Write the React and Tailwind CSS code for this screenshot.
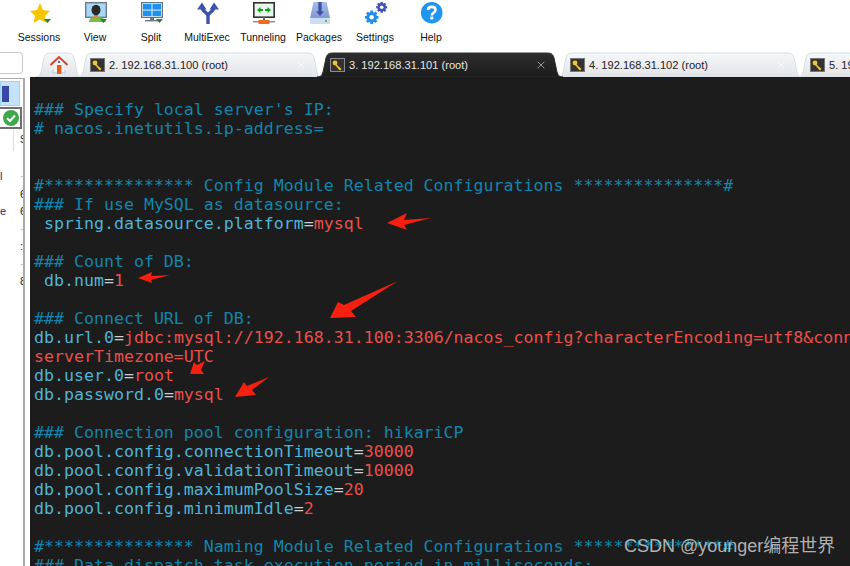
import { X } from 'lucide-react';

const tools = [
  { label: 'Sessions', icon: <StarIcon /> },
  { label: 'View', icon: <ViewIcon /> },
  { label: 'Split', icon: <SplitIcon /> },
  { label: 'MultiExec', icon: <MultiExecIcon /> },
  { label: 'Tunneling', icon: <TunnelIcon /> },
  { label: 'Packages', icon: <PackagesIcon /> },
  { label: 'Settings', icon: <SettingsIcon /> },
  { label: 'Help', icon: <HelpIcon /> },
];

const C = 'text-[#1185ad]'; // comment
const K = 'text-[#4fb4d8]'; // key
const V = 'text-[#e9504c]'; // value
const E = 'text-[#d0d0d0]'; // equals sign

const lines = [
  [],
  [["### Specify local server's IP:", C]],
  [['# nacos.inetutils.ip-address=', C]],
  [],
  [],
  [['#*************** Config Module Related Configurations ***************#', C]],
  [['### If use MySQL as datasource:', C]],
  [[' spring.datasource.platform', K], ['=', E], ['mysql', V]],
  [],
  [['### Count of DB:', C]],
  [[' db.num', K], ['=', E], ['1', V]],
  [],
  [['### Connect URL of DB:', C]],
  [['db.url.0', K], ['=', E], ['jdbc:mysql://192.168.31.100:3306/nacos_config?characterEncoding=utf8&connectTimeout=1000', V]],
  [['serverTimezone=UTC', V]],
  [['db.user.0', K], ['=', E], ['root', V]],
  [['db.password.0', K], ['=', E], ['mysql', V]],
  [],
  [['### Connection pool configuration: hikariCP', C]],
  [['db.pool.config.connectionTimeout', K], ['=', E], ['30000', V]],
  [['db.pool.config.validationTimeout', K], ['=', E], ['10000', V]],
  [['db.pool.config.maximumPoolSize', K], ['=', E], ['20', V]],
  [['db.pool.config.minimumIdle', K], ['=', E], ['2', V]],
  [],
  [['#*************** Naming Module Related Configurations ***************#', C]],
  [['### Data dispatch task execution period in milliseconds:', C]],
];

// clipped session names that show at the edge of the side panel
const sideRows = [
  ['l', '·'],
  ['', '6'],
  ['e', '6'],
  ['', '·'],
  ['', ':'],
  ['', '·'],
  ['', '8'],
];

function Caret({ x = 16, y = 18 }) {
  return <path d={`M${x} ${y} h7 l-3.5 4 z`} fill="#1f8a1f" />;
}

function StarIcon() {
  return (
    <svg width="24" height="24" viewBox="0 0 24 24">
      <path d="M12 2 L15 9 L22 10 L17 15 L18.5 22 L12 18.5 L5.5 22 L7 15 L2 10 L9 9 Z" fill="#f7c600" />
      <Caret />
    </svg>
  );
}

function ViewIcon() {
  return (
    <svg width="24" height="24" viewBox="0 0 24 24">
      <rect x="1.7" y="1.7" width="20.6" height="14.6" fill="#a8d8f5" stroke="#6b7d86" strokeWidth="1.4" />
      <path d="M5 21 C5 17 8 16 12 16 C17 16 21 17 22 21 Z" fill="#7cb84a" />
      <rect x="10" y="14" width="4" height="2" fill="#e8871e" />
      <ellipse cx="12" cy="9" rx="4.5" ry="5.2" fill="#2a2a2a" />
      <Caret />
    </svg>
  );
}

function SplitIcon() {
  return (
    <svg width="24" height="24" viewBox="0 0 24 24">
      <rect x="1.6" y="1.6" width="20.8" height="14.8" fill="#dff1fb" stroke="#5f7480" strokeWidth="1.2" />
      <rect x="3" y="3" width="8.5" height="5.6" fill="#1e90f0" />
      <rect x="12.5" y="3" width="8.5" height="5.6" fill="#1e90f0" />
      <rect x="3" y="9.6" width="8.5" height="5.4" fill="#1e90f0" />
      <rect x="12.5" y="9.6" width="8.5" height="5.4" fill="#1e90f0" />
      <rect x="10" y="17" width="4" height="2" fill="#6b7680" />
      <rect x="5" y="19" width="15" height="1.4" fill="#6b7680" />
      <Caret />
    </svg>
  );
}

function MultiExecIcon() {
  return (
    <svg width="24" height="24" viewBox="0 0 24 24">
      <path d="M12 23 V15 C12 11 6 11 6 6 M12 15 C12 11 18 11 18 6" fill="none" stroke="#3d53ad" strokeWidth="3.4" />
      <path d="M1 8.5 L6 1.5 L10.5 8.5 Z M13.5 8.5 L18 1.5 L23 8.5 Z" fill="#3d53ad" />
    </svg>
  );
}

function TunnelIcon() {
  return (
    <svg width="24" height="24" viewBox="0 0 24 24">
      <rect x="1.8" y="1.8" width="20.4" height="14.4" fill="#e8f5ee" stroke="#333" strokeWidth="1.6" />
      <path d="M5 9 l3.5 -3 v6 z M19 9 l-3.5 -3 v6 z" fill="#12a012" />
      <rect x="8" y="8" width="3" height="2" fill="#12a012" />
      <rect x="13" y="8" width="3" height="2" fill="#12a012" />
      <rect x="11" y="16" width="2" height="4" fill="#666" />
      <rect x="1" y="20" width="22" height="1.4" fill="#8a8a8a" />
      <rect x="6.5" y="19" width="11" height="4" rx="0.5" fill="#f26a1b" />
    </svg>
  );
}

function PackagesIcon() {
  return (
    <svg width="24" height="24" viewBox="0 0 24 24">
      <defs>
        <linearGradient id="pk" x1="0" y1="0" x2="0" y2="1">
          <stop offset="0" stopColor="#a8bce6" />
          <stop offset="1" stopColor="#7f9ad4" />
        </linearGradient>
      </defs>
      <path d="M5.5 1 H18.5 L22 17 H2 Z" fill="url(#pk)" />
      <rect x="2" y="17" width="20" height="6" rx="1.5" fill="#cddcf2" />
      <rect x="17" y="19" width="2" height="2" fill="#55c23b" />
      <path d="M10.4 1 h3.2 v9.5 h2.4 l-4 4.5 l-4 -4.5 h2.4 z" fill="#3a4fa3" />
    </svg>
  );
}

function Gear({ cx, cy, r, color }) {
  const teeth = [0, 45, 90, 135];
  return (
    <g>
      {teeth.map((a) => (
        <rect key={a} x={cx - r * 0.27} y={cy - r * 1.3} width={r * 0.54} height={r * 2.6} fill={color} transform={`rotate(${a} ${cx} ${cy})`} />
      ))}
      <circle cx={cx} cy={cy} r={r} fill={color} />
      <circle cx={cx} cy={cy} r={r * 0.42} fill="#fff" />
    </g>
  );
}

function SettingsIcon() {
  return (
    <svg width="24" height="24" viewBox="0 0 24 24">
      <Gear cx={7.7} cy={16.3} r={5.2} color="#1e8ff0" />
      <Gear cx={17.7} cy={6.3} r={4.2} color="#3f51b5" />
    </svg>
  );
}

function HelpIcon() {
  return (
    <svg width="24" height="24" viewBox="0 0 24 24">
      <circle cx="11.7" cy="11.7" r="10.8" fill="#1e96f0" />
      <path d="M8 9 C8 4.8 15.5 4.8 15.5 9 C15.5 12 11.8 11.5 11.8 14.5" fill="none" stroke="#fff" strokeWidth="2.6" />
      <rect x="10.3" y="15.6" width="3" height="2.8" fill="#fff" />
    </svg>
  );
}

function KeyIcon({ active }) {
  return (
    <span className={`flex h-[14px] w-[15px] shrink-0 items-center justify-center border bg-[#333] ${active ? 'border-[#8a8a8a]' : 'border-[#777]'}`}>
      <svg width="11" height="11" viewBox="0 0 11 11">
        <circle cx="3" cy="3" r="2.4" fill="#f2c230" />
        <path d="M4 4 L9.5 9 L8 10.4 L6.8 9.4 L2.8 4.6 Z" fill="#f2c230" />
      </svg>
    </span>
  );
}

function TabShape({ w, active, id }) {
  return (
    <svg className="absolute left-0 top-0" width={w} height="25" viewBox={`0 0 ${w} 25`}>
      <defs>
        <linearGradient id={id} x1="0" y1="0" x2="0" y2="1">
          <stop offset="0" stopColor={active ? '#2e2e2e' : '#f6f7f8'} />
          <stop offset="1" stopColor={active ? '#1c1c1c' : '#e3e4e6'} />
        </linearGradient>
      </defs>
      <path
        d={`M0 25 C4 25 5 23 6 20 L9 6 C10 2 12 1 16 1 H${w - 16} C${w - 12} 1 ${w - 10} 2 ${w - 9} 6 L${w - 6} 20 C${w - 5} 23 ${w - 4} 25 ${w} 25 Z`}
        fill={`url(#${id})`}
        stroke={active ? '#2e2e2e' : '#d3dfea'}
      />
    </svg>
  );
}

function Tab({ id, label, active }) {
  return (
    <div className={`relative -ml-[6px] h-[25px] w-[246px] shrink-0 ${active ? 'z-10' : ''}`}>
      <TabShape w={246} active={active} id={id} />
      <div className={`relative flex h-full items-center gap-[4px] pl-[13px] pr-[16px] pt-[1px] text-[11.1px] ${active ? 'text-[#e8e8e8]' : 'text-[#222]'}`}>
        <KeyIcon active={active} />
        <span className="flex-1 whitespace-nowrap">{label}</span>
        <X size={12} strokeWidth={1.3} className={active ? 'text-[#d5d5d5]' : 'text-white'} />
      </div>
    </div>
  );
}

function TabBar() {
  return (
    <div className="flex h-[25px] items-end overflow-hidden pl-[5px]">
      <div className="relative z-20 h-[25px] w-[48px] shrink-0">
        <TabShape w={48} id="tab-home" />
        <svg className="relative ml-[14px] mt-[3px]" width="20" height="20" viewBox="0 0 20 20">
          <rect x="3" y="15" width="14" height="4" fill="#c8d8f0" />
          <path d="M5 9 L10 4 L15 9 V17 H5 Z" fill="#f6f3ee" />
          <path d="M1.5 10 L10 2 L18.5 10" fill="none" stroke="#d0443a" strokeWidth="2" />
          <rect x="8" y="10" width="4.4" height="9" fill="#ea5a1c" />
          <rect x="9" y="6" width="2" height="2" fill="#3d6fb5" />
        </svg>
      </div>
      <Tab id="tab-2" label="2. 192.168.31.100 (root)" />
      <Tab id="tab-3" label="3. 192.168.31.101 (root)" active />
      <Tab id="tab-4" label="4. 192.168.31.102 (root)" />
      <Tab id="tab-5" label="5. 192.168.31.103 (root)" />
    </div>
  );
}

function SidePanel() {
  return (
    <div className="flex w-[30px] shrink-0 flex-col">
      <div className="h-[22px] w-[23px] rounded-r-[4px] border border-l-0 border-[#c8c8c8]" />
      <div className="mt-[4px] w-[25px] flex-1 overflow-hidden border-r-2 border-t border-[#a8a8a8] bg-white pt-[2px]">
        <div className="h-[25px] w-[20px] border border-[#9fd0f5] bg-[#c5e2fb] pl-[1px] pt-[4px]">
          <div className="h-[16px] w-[7px] bg-[#3848a8]" />
        </div>
        <div className="mt-[1px] flex h-[22px] w-[22px] items-center justify-end border-2 border-l-0 border-[#6e6e6e] pr-[1px]">
          <svg width="16" height="16" viewBox="0 0 16 16">
            <circle cx="8" cy="8" r="8" fill="#3fa84c" />
            <path d="M4 8.2 L7 11 L12 5.5" fill="none" stroke="#fff" strokeWidth="2" />
          </svg>
        </div>
        <div className="ml-[13px] h-[22px] w-px bg-[#dddddd]" />
        <div className="flex h-[17px] justify-end -mt-[20px] mb-[20px] text-[10px] leading-[17px] text-[#222]">
          <span className="w-[3px] overflow-hidden">S</span>
        </div>
        <div className="mt-[17px]">
          {sideRows.map(([left, right], i) => (
            <div key={i} className="flex h-[17.5px] justify-between text-[11px] leading-[17.5px]">
              <span className="text-[#1a2a6c]">{left}</span>
              <span className={`w-[3px] overflow-hidden ${right === '·' ? 'text-[#d08a3c]' : 'text-[#222]'}`}>{right}</span>
            </div>
          ))}
        </div>
      </div>
    </div>
  );
}

function Arrows() {
  return (
    <svg className="absolute left-0 top-0" width="850" height="566" viewBox="0 0 850 566">
      <g fill="#f5200f">
        <path d="M387 223 L407 213 L404 220 L431 218 L404 225 L407 230 Z" />
        <path d="M138 278 L152 272 L151 276 L170 275 L151 280 L152 283 Z" />
        <path d="M330 318 L356 317 L351 311 L398 281 L344 305 L338 302 Z" />
        <path d="M190 374 L204 374 L201 370 L205 361 L197 365 L194 362 Z" />
        <path d="M235 397 L256 395 L252 390 L269 377 L247 386 L244 382 Z" />
      </g>
    </svg>
  );
}

export default function App() {
  return (
    <div className="relative h-[566px] w-[850px] overflow-hidden bg-white font-['Liberation_Sans',sans-serif]">
      <div className="flex h-[52px] pl-[11px] pt-[1px]">
        {tools.map((t) => (
          <div key={t.label} className="flex w-[56px] flex-col items-center text-[10.5px] leading-none text-[#111]">
            <div className="ml-[2px] h-[24px] w-[24px]">{t.icon}</div>
            <span className="mt-[7px] whitespace-nowrap">{t.label}</span>
          </div>
        ))}
      </div>
      <div className="flex h-[514px]">
        <SidePanel />
        <div className="min-w-0 flex-1">
          <TabBar />
          <div className="h-[489px] overflow-hidden bg-[#1c1c1c] pl-[4px] pt-[4px] font-['DejaVu_Sans_Mono',monospace] text-[16.6px] leading-[19px]">
            {lines.map((parts, i) => (
              <div key={i} className="h-[19px] whitespace-pre">
                {parts.map(([text, cls], j) => (
                  <span key={j} className={cls}>{text}</span>
                ))}
              </div>
            ))}
          </div>
        </div>
      </div>
      <Arrows />
      <div className="absolute left-[624px] top-[534px] text-[18px] leading-[24px] text-[#c4c4c4]/90 font-['Liberation_Sans','Noto_Sans_CJK_SC',sans-serif]">
        CSDN @younger编程世界
      </div>
    </div>
  );
}
